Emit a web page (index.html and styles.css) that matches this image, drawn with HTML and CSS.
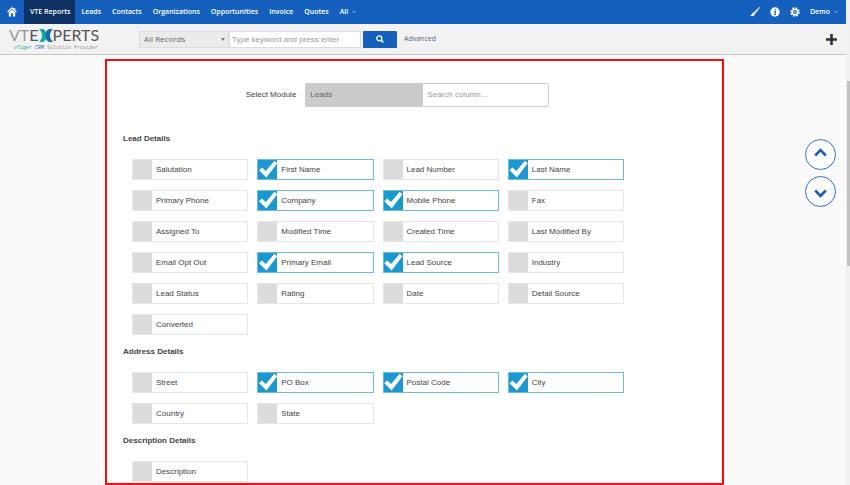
FILE: index.html
```html
<!DOCTYPE html>
<html lang="en">
<head>
  <meta charset="UTF-8"/>
  <meta name="viewport" content="width=device-width, initial-scale=1.0"/>
  <title>VTE Reports</title>
  <link rel="stylesheet" href="styles.css">
</head>
<body>
  <div class="page">
    <!-- Top menu -->
    <nav class="navbar">
      <a class="nav-home" href="#" aria-label="Home">
        <svg width="10" height="10" viewBox="0 0 10 10"><path d="M0.6 5 5 1l4.4 4M7.6 1v2" fill="none" stroke="#fff" stroke-width="1.3"/><path d="M1.8 5.6 5 2.8l3.2 2.8V9.4H6V6.6H4v2.8H1.8z" fill="#fff"/></svg>
      </a>
      <a class="nav-link active" href="#">VTE Reports</a>
      <a class="nav-link" href="#">Leads</a>
      <a class="nav-link" href="#">Contacts</a>
      <a class="nav-link" href="#">Organizations</a>
      <a class="nav-link" href="#">Opportunities</a>
      <a class="nav-link" href="#">Invoice</a>
      <a class="nav-link" href="#">Quotes</a>
      <a class="nav-link" href="#">All <span class="caret"></span></a>
      <div class="nav-tools">
        <a href="#" aria-label="Theme">
          <svg width="10" height="10" viewBox="0 0 10 10"><path d="M9.8.2 4.2 5.2l1 1.1z" fill="#fff" stroke="#fff" stroke-width=".7"/><path d="M3.7 5.6c-1.6 0-1.5 2.2-3.4 3.2 2.3.9 4.7.1 4.5-2.1z" fill="#fff"/></svg>
        </a>
        <a href="#" aria-label="Info">
          <svg width="10" height="10" viewBox="0 0 10 10"><circle cx="5" cy="5" r="4.7" fill="#fff"/><path d="M5.7 1.8v1.3M4.2 4.3h1.2L4.8 7.6h1" fill="none" stroke="#1560bd" stroke-width="1.2"/></svg>
        </a>
        <a href="#" aria-label="Settings">
          <svg width="10" height="10" viewBox="0 0 10 10"><circle cx="5" cy="5" r="4" fill="none" stroke="#fff" stroke-width="1.6" stroke-dasharray="1.7 1.44"/><circle cx="5" cy="5" r="2.7" fill="none" stroke="#fff" stroke-width="1.6"/><circle cx="5" cy="5" r=".8" fill="#fff"/></svg>
        </a>
        <a class="nav-user" href="#">Demo <span class="caret"></span></a>
      </div>
    </nav>

    <!-- Logo and search -->
    <header class="searchbar">
      <a class="logo" href="#">
        <span class="logo-name">
          <span class="logo-vt">VT</span><span>E</span>
          <svg width="14" height="13" viewBox="0 0 14 13"><path d="M0 0h4C6.500 1 7.500 3.500 7.500 6.500S6.500 12 4 13H0c2-2 3-4 3-6.500S2 2 0 0z" fill="#12a99b"/><path d="M14 0h-4C7.500 1 6.500 3.500 6.500 6.500S7.500 12 10 13h4c-2-2-3-4-3-6.500S12 2 14 0z" fill="#1769b0"/></svg>
          <span>PERTS</span>
        </span>
        <span class="logo-sub"><span class="teal">vTiger</span> <span class="blue">CRM</span> Solution Provider</span>
      </a>
      <form class="search">
        <div class="select-wrap">
          <select aria-label="Records">
            <option>All Records</option>
          </select>
        </div>
        <input class="keyword" type="text" aria-label="Keyword" placeholder="Type keyword and press enter"/>
        <button class="btn-search" type="button" aria-label="Search">
          <svg width="8" height="8" viewBox="0 0 8 8"><circle cx="3.300" cy="3.300" r="2.500" fill="none" stroke="#fff" stroke-width="1.300"/><path d="M5 5l2.400 2.400" stroke="#fff" stroke-width="1.500"/></svg>
        </button>
        <a class="advanced" href="#">Advanced</a>
      </form>
      <button class="btn-add" type="button" aria-label="Add">
        <svg width="11" height="11" viewBox="0 0 11 11"><path d="M5.500 0v11M0 5.500h11" stroke="#2c3138" stroke-width="2.600"/></svg>
      </button>
    </header>

    <!-- Column picker -->
    <div class="content">
      <main class="panel">
        <div class="picker">
          <label for="module">Select Module</label>
          <div class="picker-fields">
            <select id="module">
              <option>Leads</option>
            </select>
            <input type="text" aria-label="Search column" placeholder="Search column..."/>
          </div>
        </div>

        <h3>Lead Details</h3>
        <div class="fields">
          <label class="field"><input type="checkbox"/>Salutation</label>
          <label class="field"><input type="checkbox" checked/>First Name</label>
          <label class="field"><input type="checkbox"/>Lead Number</label>
          <label class="field"><input type="checkbox" checked/>Last Name</label>
          <label class="field"><input type="checkbox"/>Primary Phone</label>
          <label class="field"><input type="checkbox" checked/>Company</label>
          <label class="field"><input type="checkbox" checked/>Mobile Phone</label>
          <label class="field"><input type="checkbox"/>Fax</label>
          <label class="field"><input type="checkbox"/>Assigned To</label>
          <label class="field"><input type="checkbox"/>Modified Time</label>
          <label class="field"><input type="checkbox"/>Created Time</label>
          <label class="field"><input type="checkbox"/>Last Modified By</label>
          <label class="field"><input type="checkbox"/>Email Opt Out</label>
          <label class="field"><input type="checkbox" checked/>Primary Email</label>
          <label class="field"><input type="checkbox" checked/>Lead Source</label>
          <label class="field"><input type="checkbox"/>Industry</label>
          <label class="field"><input type="checkbox"/>Lead Status</label>
          <label class="field"><input type="checkbox"/>Rating</label>
          <label class="field"><input type="checkbox"/>Date</label>
          <label class="field"><input type="checkbox"/>Detail Source</label>
          <label class="field"><input type="checkbox"/>Converted</label>
        </div>

        <h3>Address Details</h3>
        <div class="fields">
          <label class="field"><input type="checkbox"/>Street</label>
          <label class="field"><input type="checkbox" checked/>PO Box</label>
          <label class="field"><input type="checkbox" checked/>Postal Code</label>
          <label class="field"><input type="checkbox" checked/>City</label>
          <label class="field"><input type="checkbox"/>Country</label>
          <label class="field"><input type="checkbox"/>State</label>
        </div>

        <h3>Description Details</h3>
        <div class="fields">
          <label class="field"><input type="checkbox"/>Description</label>
        </div>
      </main>

      <aside class="steps">
        <button class="step step-up" type="button" aria-label="Up">
          <svg width="13" height="9" viewBox="0 0 13 9"><path d="M1.200 7.500l5.300-5.300 5.300 5.300" fill="none" stroke="#1560bd" stroke-width="2.600"/></svg>
        </button>
        <button class="step step-down" type="button" aria-label="Down">
          <svg width="13" height="9" viewBox="0 0 13 9"><path d="M1.200 1.500l5.300 5.300 5.300-5.300" fill="none" stroke="#1560bd" stroke-width="2.600"/></svg>
        </button>
      </aside>
    </div>
  </div>
  <div class="rail"><div class="rail-thumb"></div></div>
</body>
</html>
```
FILE: styles.css
```css
/* Reset */
* { box-sizing: border-box; margin: 0; padding: 0; }
body {
  display: flex; min-height: 100vh;
  font: 8px/12px "Liberation Sans", Arial, sans-serif;
  color: #444; background: #fafafa;
}
a { text-decoration: none; color: inherit; }
svg { display: block; flex: none; }
button { border: none; cursor: pointer; }
input, select { font: inherit; color: inherit; outline: none; }

.page { flex: 1; min-width: 0; display: flex; flex-direction: column; }

/* Top menu */
.navbar {
  display: flex; height: 24px;
  background: #1560bd; color: #fff;
  font: 600 7px/24px "Open Sans", sans-serif;
}
.navbar a { display: flex; align-items: center; }
.nav-home { width: 24px; padding-left: 7px; }
.nav-link { padding: 0 5px 0 6px; white-space: nowrap; }
.nav-link.active { background: #0d3263; }
.nav-tools {
  margin-left: auto; padding-right: 8px;
  display: flex; gap: 10px;
}
.caret {
  margin-left: 4px;
  border: 2px solid transparent;
  border-top-color: #6d9bd6; border-bottom: none;
}

/* Logo and search */
.searchbar {
  display: flex; align-items: center;
  height: 31px; padding: 0 9px;
  background: #f2f2f2; border-bottom: 1px solid #c4c4c4;
}
.logo { flex: 0 0 130px; }
.logo-name {
  display: flex; align-items: center;
  font: 16px/16px Lato, sans-serif; color: #555;
}
.logo-vt { color: #999; }
.logo-sub {
  display: block; padding: 2px 0 0 5px;
  font: 5px/6px "Liberation Mono", monospace;
  color: #999; white-space: nowrap;
}
.teal { color: #12a99b; }
.blue { color: #1769b0; }
.search { display: flex; align-items: center; }
.select-wrap { position: relative; }
.select-wrap::after {
  content: ""; position: absolute; right: 4px; top: 7px;
  border: 2px solid transparent;
  border-top: 3px solid #777; border-bottom: none;
}
.select-wrap select {
  display: block; width: 90px; height: 17px; padding: 0 4px;
  appearance: none; background: #ebebeb;
  border: 1px solid #ddd; border-radius: 0;
  font-family: "Open Sans", sans-serif; color: #666;
}
.keyword {
  width: 132px; height: 17px; padding: 0 2px;
  border: 1px solid #ddd; background: #fff;
}
::placeholder { color: #999; opacity: 1; }
.btn-search {
  width: 34px; height: 17px; margin: 0 7px 0 2px;
  display: flex; align-items: center; justify-content: center;
  background: #1560bd; border-radius: 1px;
}
.advanced { font: 7px/12px "Open Sans", sans-serif; color: #45678f; }
.btn-add { margin-left: auto; background: none; }

/* Column picker */
.content { flex: 1; display: flex; padding: 4px 10px 0 105px; }
.panel {
  flex: 0 1 619px; padding: 22px 16px 0;
  background: #fff; border: 2px solid #f80c12;
}
.picker {
  display: flex; align-items: center; justify-content: center;
  gap: 9px; padding-right: 34px; margin-bottom: 22px;
}
.picker-fields {
  display: flex; width: 244px; height: 24px;
  border: 1px solid #ccc; border-radius: 2px;
}
.picker-fields select {
  flex: 0 0 117px; padding: 0 4px;
  appearance: none; border: none; border-radius: 0;
  background: #cbcbcb; color: #666;
}
.picker-fields input { flex: 1; min-width: 0; padding: 0 4px; border: none; }
.panel h3 { font-size: 8px; line-height: 20px; margin: 7px 0 10px; }
.fields {
  display: grid; grid-template-columns: repeat(4, 1fr);
  gap: 10px 9px; max-width: 501px; padding-left: 9px;
}

/* Checkbox tile */
.field {
  display: flex; align-items: center; gap: 4px;
  height: 21px; border: 1px solid #e6e6e6;
  white-space: nowrap; cursor: pointer;
}
.field input {
  width: 19px; height: 19px;
  appearance: none; background: #dcdcdc;
}
.field:has(:checked) { border-color: #6dbbdd; }
.field input:checked { background: #1b98cf; }
.field input:checked::before {
  content: ""; display: block; height: 19px; background: #fff;
  clip-path: polygon(4% 54%, 19% 39%, 40% 58%, 85% 4%, 100% 17%, 43% 92%);
}

/* Up / down */
.steps {
  flex: 1; padding-top: 80px;
  display: flex; flex-direction: column;
  align-items: flex-end; gap: 6px;
}
.step {
  width: 31px; height: 31px;
  display: flex; justify-content: center; align-items: center;
  background: #fff; border: 1px solid #2f74c8; border-radius: 50%;
}
.step-up { padding-bottom: 5px; }
.step-down { padding-top: 3px; background: none; }

/* Scroll rail */
.rail { flex: 0 0 4px; padding-top: 81px; background: #f1f1f1; }
.rail-thumb { height: 185px; margin-left: 1px; background: #c1c1c1; }
```
